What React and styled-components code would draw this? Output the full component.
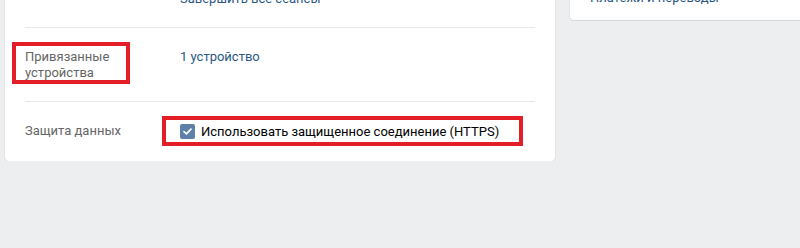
import styled, { createGlobalStyle } from "styled-components";

const GlobalStyle = createGlobalStyle`
  html, body {
    margin: 0;
    padding: 0;
    background: #edeef0;
    overflow: hidden;
  }

  body {
    font-family: Roboto, "Open Sans", "DejaVu Sans", sans-serif;
    font-size: 13px;
    line-height: 16px;
    -webkit-font-smoothing: antialiased;
  }
`;

const Page = styled.div`
  display: flex;
  align-items: flex-start;
  gap: 15px;
  padding-left: 5px;
  margin-top: -30px;
  width: 860px;
`;

const Card = styled.div`
  background: #ffffff;
  border-radius: 4px;
  box-shadow: 0 1px 0 0 #d7d8db, 0 0 0 1px #e3e4e8;
  width: ${(props) => props.width}px;
  flex-shrink: 0;
`;

const SettingsList = styled.div`
  padding: 0 20px;
`;

const Row = styled.div`
  display: flex;
  padding: 21px 0 20px;
  border-top: 1px solid #e7e8ec;

  &:first-child {
    border-top: none;
  }

  &:last-child {
    padding-bottom: 21px;
  }
`;

const Label = styled.div`
  width: 155px;
  flex-shrink: 0;
  color: #656565;
`;

const Value = styled.div`
  flex: 1;
  color: #000000;
`;

const Link = styled.a`
  color: #2a5885;
  text-decoration: none;
  cursor: pointer;
`;

const Marked = styled.span`
  position: relative;
  display: inline-block;

  &::after {
    content: "";
    position: absolute;
    left: ${(props) => props.left}px;
    top: ${(props) => props.top}px;
    width: ${(props) => props.w}px;
    height: ${(props) => props.h}px;
    border: 4px solid #e41e26;
    box-sizing: border-box;
    pointer-events: none;
  }
`;

const CheckLine = styled.label`
  display: inline-flex;
  align-items: center;
  gap: 6px;
  color: #000000;
`;

const Box = styled.span`
  width: 15px;
  height: 15px;
  border-radius: 2px;
  background: #5e81a8;
  display: inline-flex;
  align-items: center;
  justify-content: center;
  flex-shrink: 0;
`;

const Menu = styled.div`
  padding: 20px 0 14px;
`;

const MenuItem = styled.div`
  padding: 0 20px;
  color: #2a5885;
  line-height: 16px;
`;

const Checkbox = ({ children }) => (
  <CheckLine>
    <Box>
      <svg width="9" height="7" viewBox="0 0 9 7">
        <path
          d="M1 3.6 L3.4 5.8 L8 1.2"
          fill="none"
          stroke="#ffffff"
          strokeWidth="1.7"
          strokeLinecap="round"
          strokeLinejoin="round"
        />
      </svg>
    </Box>
    {children}
  </CheckLine>
);

export default function App() {
  return (
    <>
      <GlobalStyle />
      <Page>
        <Card width={550}>
          <SettingsList>
            <Row>
              <Label />
              <Value>
                <Link>Завершить все сеансы</Link>
              </Value>
            </Row>
            <Row>
              <Label>
                <Marked left={-13} top={-7} w={118} h={42}>
                  Привязанные
                  <br />
                  устройства
                </Marked>
              </Label>
              <Value>
                <Link>1 устройство</Link>
              </Value>
            </Row>
            <Row>
              <Label>Защита данных</Label>
              <Value>
                <Marked left={-18} top={-7} w={361} h={30}>
                  <Checkbox>Использовать защищенное соединение (HTTPS)</Checkbox>
                </Marked>
              </Value>
            </Row>
          </SettingsList>
        </Card>
        <Card width={240}>
          <Menu>
            <MenuItem>Платежи и переводы</MenuItem>
          </Menu>
        </Card>
      </Page>
    </>
  );
}
